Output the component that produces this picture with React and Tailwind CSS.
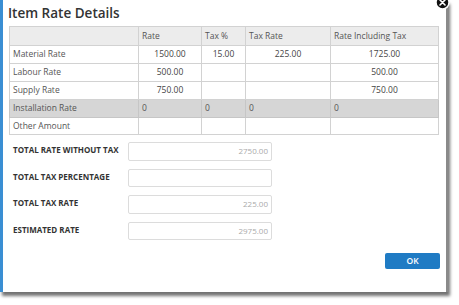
import React from "react";

const rows = [
  { label: "Material Rate", rate: "1500.00", tax: "15.00", taxRate: "225.00", incl: "1725.00" },
  { label: "Labour Rate", rate: "500.00", tax: "", taxRate: "", incl: "500.00" },
  { label: "Supply Rate", rate: "750.00", tax: "", taxRate: "", incl: "750.00" },
];

const totals = [
  { label: "TOTAL RATE WITHOUT TAX", value: "2750.00" },
  { label: "TOTAL TAX PERCENTAGE", value: "" },
  { label: "TOTAL TAX RATE", value: "225.00" },
  { label: "ESTIMATED RATE", value: "2975.00" },
];

export default function App() {
  const font = { fontFamily: '"Open Sans", "Noto Sans", sans-serif' };
  return (
    <div className="w-[459px] h-[305px] bg-white overflow-hidden" style={font}>
      <div className="relative w-[448px] h-[292px] bg-white border-l-[3px] border-l-[#3a8ed3] border-r-[2px] border-r-[#8a8a8a] shadow-[2px_4px_3px_rgba(0,0,0,0.55)] pl-[6px] pt-[4px]">
        <svg className="absolute right-[-4px] top-[-5px]" width="15" height="15" viewBox="0 0 15 15">
          <circle cx="7.5" cy="7.5" r="6.5" fill="#111" stroke="#fff" strokeWidth="1.5" />
          <path d="M5 5 L10 10 M10 5 L5 10" stroke="#fff" strokeWidth="1.6" strokeLinecap="round" />
        </svg>
        <h1 className="text-[13.5px] leading-[18px] font-semibold text-[#333] ml-[-1px] h-[22px]">Item Rate Details</h1>
        <table className="border-collapse text-[8.5px] text-[#555] w-[429px] table-fixed">
          <colgroup>
            <col className="w-[129px]" />
            <col className="w-[63px]" />
            <col className="w-[44px]" />
            <col className="w-[85px]" />
            <col className="w-[108px]" />
          </colgroup>
          <thead>
            <tr className="h-[19px] bg-[#ececec]">
              <th className="border border-[#d2d2d2] font-normal text-left px-[3px]"></th>
              <th className="border border-[#d2d2d2] font-normal text-left px-[3px]">Rate</th>
              <th className="border border-[#d2d2d2] font-normal text-left px-[3px]">Tax %</th>
              <th className="border border-[#d2d2d2] font-normal text-left px-[3px]">Tax Rate</th>
              <th className="border border-[#d2d2d2] font-normal text-left px-[3px]">Rate Including Tax</th>
            </tr>
          </thead>
          <tbody>
            {rows.map((r) => (
              <tr key={r.label} className="h-[18px]">
                <td className="border border-[#d2d2d2] px-[3px]">{r.label}</td>
                <td className="border border-[#d2d2d2] text-center text-[#444]">{r.rate}</td>
                <td className="border border-[#d2d2d2] text-center text-[#444]">{r.tax}</td>
                <td className="border border-[#d2d2d2] text-center text-[#444]">{r.taxRate}</td>
                <td className="border border-[#d2d2d2] text-center text-[#444]">{r.incl}</td>
              </tr>
            ))}
            <tr className="h-[18px] bg-[#d6d6d6]">
              <td className="border border-[#c6c6c6] px-[3px]">Installation Rate</td>
              <td className="border border-[#c6c6c6] px-[3px]">0</td>
              <td className="border border-[#c6c6c6] px-[3px]">0</td>
              <td className="border border-[#c6c6c6] px-[3px]">0</td>
              <td className="border border-[#c6c6c6] px-[3px]">0</td>
            </tr>
            <tr className="h-[17px]">
              <td className="border border-[#d2d2d2] px-[3px]">Other Amount</td>
              <td className="border border-[#d2d2d2]"></td>
              <td className="border border-[#d2d2d2]"></td>
              <td className="border border-[#d2d2d2]"></td>
              <td className="border border-[#d2d2d2]"></td>
            </tr>
          </tbody>
        </table>
        <div className="flex flex-col gap-[8px] mt-[7px] pl-[4px]">
          {totals.map((t) => (
            <div key={t.label} className="flex items-start">
              <div className="w-[115px] pt-[2px] text-[8px] leading-[12px] font-bold text-[#333]">{t.label}</div>
              <div className="w-[144px] h-[18.5px] border border-[#dcdcdc] rounded-[2px] flex items-center justify-end pr-[3px] text-[8px] text-[#aaa]">
                {t.value}
              </div>
            </div>
          ))}
        </div>
        <div className="flex justify-end mt-[13px] pr-[6px]">
          <button className="w-[55px] h-[16px] rounded-[2px] bg-[#1f7bc4] text-white text-[8.5px] font-semibold leading-none">
            OK
          </button>
        </div>
      </div>
    </div>
  );
}
